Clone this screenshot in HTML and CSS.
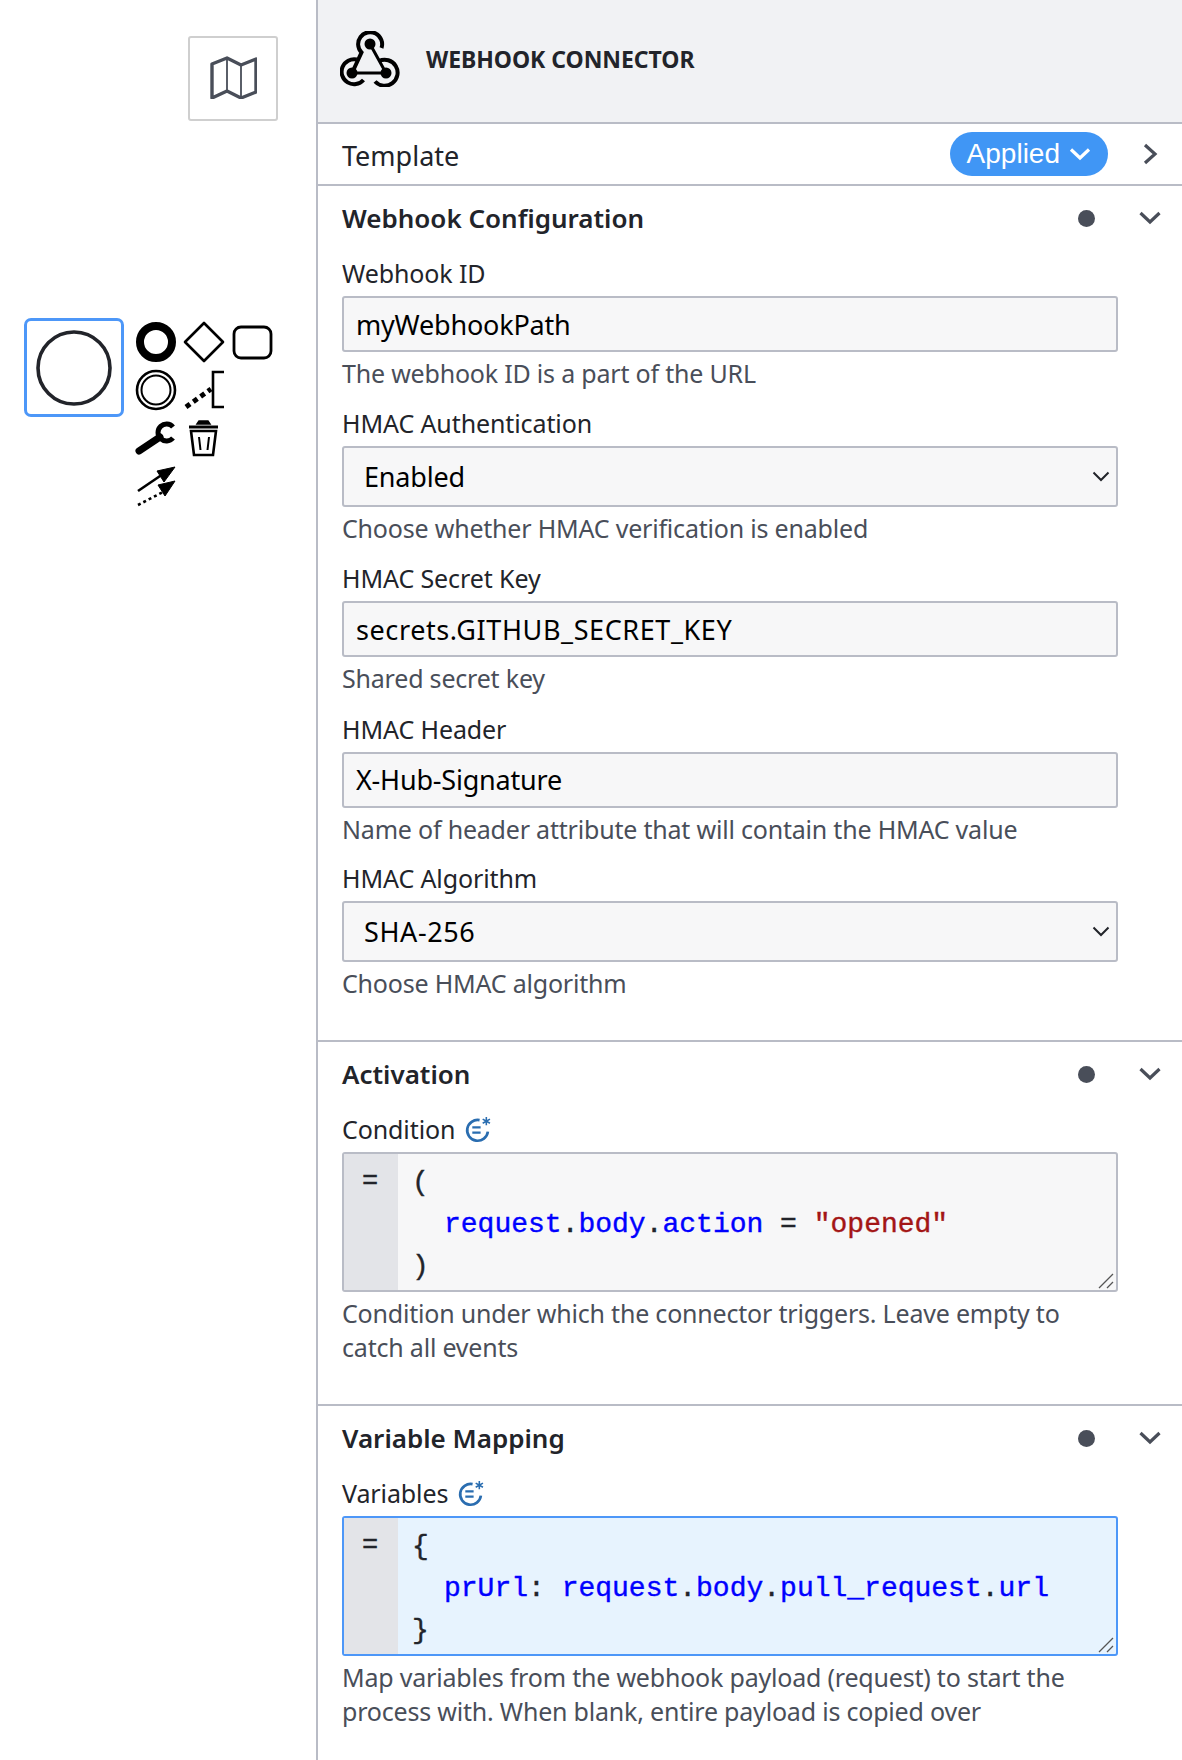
FILE: index.html
```html
<!DOCTYPE html>
<html lang="en">
<head>
    <meta charset="UTF-8">
    <meta name="viewport" content="width=device-width, initial-scale=1.0">
    <title>Webhook Connector</title>
    <link rel="stylesheet" href="styles.css">
</head>
<body>
    <div class="canvas">
        <button class="map-btn" type="button">
            <svg width="48" height="44" viewBox="0 0 48 44" fill="none" stroke="#494e59">
                <path d="M3 9 L18 3 L32 10 L47 4 V37 L32 43 L18 36 L3 43 Z" stroke-width="3.4" stroke-linejoin="round"/>
                <path d="M18 3 V36 M32 10 V43" stroke-width="1.8"/>
            </svg>
        </button>

        <div class="start-event">
            <svg width="78" height="78" viewBox="0 0 78 78"><circle cx="39" cy="39" r="36" fill="none" stroke="#22242a" stroke-width="3.6"/></svg>
        </div>

        <svg class="context-pad" width="150" height="190" viewBox="130 318 150 190" fill="none" stroke="#000">
            <circle cx="156" cy="342" r="16" stroke-width="8"/>
            <path d="M204 323 L223 342 L204 361 L185 342 Z" stroke-width="2.6" stroke-linejoin="round"/>
            <rect x="234" y="327" width="37" height="31" rx="7" stroke-width="2.8"/>
            <circle cx="156" cy="390" r="19" stroke-width="2.6"/>
            <circle cx="156" cy="390" r="14.5" stroke-width="2"/>
            <path d="M186 407 L211 389" stroke-width="5" stroke-dasharray="5 4"/>
            <path d="M224 372 H213 V407 H224" stroke-width="2.6"/>
            <path d="M139 451 L160 437" stroke-width="7" stroke-linecap="round"/>
            <path d="M173 427 A8.500 8.500 0 1 0 173 438" stroke-width="5"/>
            <path d="M189 427 H218" stroke-width="3"/>
            <path d="M197 424 L199 421 H208 L210 424 Z" fill="#000" stroke-width="1.5"/>
            <path d="M191 431 H216 L213 455 H194 Z" stroke-width="2.6"/>
            <path d="M199 437 L200.5 450 M209 437 L207.5 450" stroke-width="2"/>
            <path d="M138 491 L163 474" stroke-width="2.6"/>
            <path d="M175 467 L157 471 L164 482 Z" fill="#000" stroke-width="1"/>
            <path d="M138 505 L163 492" stroke-width="2.6" stroke-dasharray="3 3"/>
            <path d="M175 481 L158 485 L165 496 Z" fill="#000" stroke-width="1"/>
        </svg>
    </div>

    <div class="panel">
        <div class="panel-header">
            <svg class="webhook-icon" width="60" height="56" viewBox="0 0 60 56" fill="none" stroke="#000">
                <circle cx="30" cy="13" r="5.5" fill="#000" stroke="none"/>
                <circle cx="12" cy="42" r="5.5" fill="#000" stroke="none"/>
                <circle cx="46" cy="42" r="5.5" fill="#000" stroke="none"/>
                <path d="M30 13 L46 42 M12 42 H46" stroke-width="3"/>
                <path d="M12 42 L21.5 21.5 A12 12 0 1 1 41.5 17" stroke-width="4"/>
                <path d="M16.7 28.5 A12.5 12.5 0 1 0 23.5 49" stroke-width="4"/>
                <path d="M39 30 A13 13 0 1 1 35 50.5" stroke-width="4"/>
            </svg>
            <span class="panel-title">WEBHOOK CONNECTOR</span>
        </div>

        <div class="template-row">
            <span class="template-label">Template</span>
            <span class="pill">Applied
                <svg width="22" height="14" viewBox="0 0 22 14" fill="none" stroke="#fff" stroke-width="3.2"><path d="M2 2.5 L11 11 L20 2.5"/></svg>
            </span>
            <svg class="arrow-right" width="16" height="22" viewBox="0 0 16 22" fill="none" stroke="#494e59" stroke-width="3.2"><path d="M3 2 L13 11 L3 20"/></svg>
        </div>

        <div class="section section-first">
            <div class="section-head">
                <span class="section-title">Webhook Configuration</span>
                <span class="dot"></span>
                <svg class="arrow-down" width="22" height="14" viewBox="0 0 22 14" fill="none" stroke="#494e59" stroke-width="3.2"><path d="M1.500 2 L11 11 L20.500 2"/></svg>
            </div>

            <div class="entry">
                <label for="webhookId">Webhook ID</label>
                <input type="text" id="webhookId" value="myWebhookPath">
                <div class="desc">The webhook ID is a part of the URL</div>
            </div>

            <div class="entry entry-select">
                <label for="hmacAuth">HMAC Authentication</label>
                <div class="select-wrap">
                    <select id="hmacAuth"><option>Enabled</option><option>Disabled</option></select>
                    <svg class="select-arrow" width="18" height="11" viewBox="0 0 18 11" fill="none" stroke="#22242a" stroke-width="2"><path d="M1.500 1.500 L9 9 L16.500 1.500"/></svg>
                </div>
                <div class="desc">Choose whether HMAC verification is enabled</div>
            </div>

            <div class="entry entry-key">
                <label for="hmacKey">HMAC Secret Key</label>
                <input class="wide" type="text" id="hmacKey" value="secrets.GITHUB_SECRET_KEY">
                <div class="desc">Shared secret key</div>
            </div>

            <div class="entry">
                <label for="hmacHeader">HMAC Header</label>
                <input type="text" id="hmacHeader" value="X-Hub-Signature">
                <div class="desc">Name of header attribute that will contain the HMAC value</div>
            </div>

            <div class="entry entry-select">
                <label for="hmacAlgo">HMAC Algorithm</label>
                <div class="select-wrap">
                    <select class="wide" id="hmacAlgo"><option>SHA-256</option><option>SHA-1</option></select>
                    <svg class="select-arrow" width="18" height="11" viewBox="0 0 18 11" fill="none" stroke="#22242a" stroke-width="2"><path d="M1.500 1.500 L9 9 L16.500 1.500"/></svg>
                </div>
                <div class="desc">Choose HMAC algorithm</div>
            </div>
        </div>

        <div class="section section-activation">
            <div class="section-head">
                <span class="section-title">Activation</span>
                <span class="dot"></span>
                <svg class="arrow-down" width="22" height="14" viewBox="0 0 22 14" fill="none" stroke="#494e59" stroke-width="3.2"><path d="M1.500 2 L11 11 L20.500 2"/></svg>
            </div>

            <div class="entry">
                <div class="feel-label">Condition
                    <svg class="feel-icon" width="27" height="27" viewBox="0 0 26 26" fill="none" stroke="#2a6db0" stroke-width="2.6"><path d="M15 4 A10 10 0 1 0 23 15"/><path d="M8 11 H16 M8 16 H16" stroke-width="2.2"/><path d="M21.500 1 V9 M18 3 L25 7 M25 3 L18 7" stroke-width="1.500"/></svg>
                </div>
                <div class="editor">
                    <div class="gutter">=</div>
                    <div class="code">
                        <div class="code-line">(</div>
                        <div class="code-line indent"><span class="kw">request</span>.<span class="kw">body</span>.<span class="kw">action</span> = <span class="str">"opened"</span></div>
                        <div class="code-line">)</div>
                    </div>
                    <svg class="resize" width="16" height="16" viewBox="0 0 16 16" fill="none" stroke="#555" stroke-width="1.300"><path d="M1 15 L15 1 M9 15 L15 9"/></svg>
                </div>
                <div class="desc">Condition under which the connector triggers. Leave empty to catch all events</div>
            </div>
        </div>

        <div class="section section-mapping">
            <div class="section-head">
                <span class="section-title">Variable Mapping</span>
                <span class="dot"></span>
                <svg class="arrow-down" width="22" height="14" viewBox="0 0 22 14" fill="none" stroke="#494e59" stroke-width="3.2"><path d="M1.500 2 L11 11 L20.500 2"/></svg>
            </div>

            <div class="entry">
                <div class="feel-label">Variables
                    <svg class="feel-icon" width="27" height="27" viewBox="0 0 26 26" fill="none" stroke="#2a6db0" stroke-width="2.6"><path d="M15 4 A10 10 0 1 0 23 15"/><path d="M8 11 H16 M8 16 H16" stroke-width="2.2"/><path d="M21.500 1 V9 M18 3 L25 7 M25 3 L18 7" stroke-width="1.500"/></svg>
                </div>
                <div class="editor editor-focus">
                    <div class="gutter">=</div>
                    <div class="code">
                        <div class="code-line">{</div>
                        <div class="code-line indent"><span class="kw">prUrl</span>: <span class="kw">request</span>.<span class="kw">body</span>.<span class="kw">pull_request</span>.<span class="kw">url</span></div>
                        <div class="code-line">}</div>
                    </div>
                    <svg class="resize" width="16" height="16" viewBox="0 0 16 16" fill="none" stroke="#555" stroke-width="1.300"><path d="M1 15 L15 1 M9 15 L15 9"/></svg>
                </div>
                <div class="desc">Map variables from the webhook payload (request) to start the process with. When blank, entire payload is copied over</div>
            </div>
        </div>
    </div>
</body>
</html>
```

FILE: styles.css
```css
html, body {
    height: 100%;
}
body {
    margin: 0;
    display: flex;
    font-family: "Noto Sans", Arial, sans-serif;
    color: #22242a;
    background: #fff;
    overflow: hidden;
}
* {
    box-sizing: border-box;
}

/* diagram canvas */
.canvas {
    position: relative;
    width: 316px;
    flex: none;
}
.map-btn {
    position: absolute;
    left: 188px;
    top: 36px;
    width: 90px;
    height: 85px;
    padding: 0 0 4px;
    background: #fff;
    border: 2px solid #cfcfcf;
    border-radius: 3px;
    display: flex;
    align-items: center;
    justify-content: center;
}
.start-event {
    position: absolute;
    left: 24px;
    top: 318px;
    width: 100px;
    height: 99px;
    border: 3.5px solid #4d97f8;
    border-radius: 7px;
    display: flex;
    align-items: center;
    justify-content: center;
}
.context-pad {
    position: absolute;
    left: 130px;
    top: 318px;
}

/* properties panel */
.panel {
    flex: 1;
    border-left: 2px solid #b9bcc6;
}
.panel-header {
    height: 124px;
    background: #f1f2f4;
    border-bottom: 2px solid #b9bcc6;
    display: flex;
    align-items: center;
    padding: 0 0 4px 22px;
}
.webhook-icon {
    flex: none;
}
.panel-title {
    margin-left: 26px;
    font-size: 23px;
    font-weight: 700;
    letter-spacing: -0.05px;
}
.template-row {
    height: 62px;
    border-bottom: 2px solid #b9bcc6;
    display: flex;
    align-items: center;
    padding: 0 24px;
}
.template-label {
    font-size: 27px;
    flex: 1;
    padding-top: 2px;
}
.pill {
    display: flex;
    align-items: center;
    gap: 9px;
    height: 44px;
    padding: 0 17px;
    border-radius: 22px;
    background: #4096f5;
    color: #fff;
    font-family: "Liberation Sans", Arial, sans-serif;
    font-size: 28px;
}
.arrow-right {
    margin-left: 34px;
}

.section {
    border-bottom: 2px solid #b9bcc6;
    padding: 0 0 0 24px;
}
.section-first {
    height: 856px;
}
.section-activation {
    height: 364px;
}
.section-mapping {
    border-bottom: none;
}
.section-head {
    display: flex;
    align-items: center;
    height: 64px;
    margin-bottom: 8px;
    padding-right: 21px;
}
.section-title {
    flex: 1;
    font-size: 26px;
    font-weight: 600;
}
.dot {
    width: 17px;
    height: 17px;
    border-radius: 50%;
    background: #494e59;
    margin-right: 44px;
}

.entry {
    width: 776px;
    margin-bottom: 17px;
}
.entry-select {
    margin-bottom: 18px;
}
.entry-key {
    margin-bottom: 18px;
}
.entry label, .feel-label {
    display: block;
    font-size: 25px;
    line-height: 30px;
    letter-spacing: -0.1px;
    margin-bottom: 8px;
}
.feel-label {
    display: flex;
    align-items: center;
    gap: 9px;
}
.entry input, .entry select {
    display: block;
    width: 100%;
    font-family: inherit;
    font-size: 27px;
    letter-spacing: -0.2px;
    color: #000;
    background: #f7f7f8;
    border: 2px solid #b9bcc6;
    border-radius: 3px;
    padding: 0 12px;
    outline: none;
}
.entry input {
    height: 56px;
}
.select-wrap {
    position: relative;
    margin-top: 3px;
}
.entry select {
    height: 61px;
    padding: 0 20px;
    appearance: none;
}
.entry .wide {
    letter-spacing: 0.6px;
}
.select-arrow {
    position: absolute;
    right: 8px;
    top: 25px;
}
.desc {
    font-size: 25px;
    line-height: 33.5px;
    letter-spacing: -0.2px;
    color: #494e59;
    margin-top: 5px;
}

.editor {
    position: relative;
    display: flex;
    height: 140px;
    background: #f7f7f8;
    border: 2px solid #b9bcc6;
    border-radius: 3px;
}
.editor-focus {
    background: #e7f3fe;
    border-color: #4d97f8;
}
.gutter {
    width: 54px;
    flex: none;
    background: #e3e4e8;
    font-family: "Liberation Mono", monospace;
    font-size: 27px;
    line-height: 57px;
    text-align: center;
    padding-right: 2px;
    -webkit-text-stroke: 0.4px;
}
.code {
    padding: 8px 0 0 14px;
    font-family: "Liberation Mono", monospace;
    font-size: 28px;
    -webkit-text-stroke: 0.4px;
}
.code-line {
    line-height: 42px;
    white-space: pre;
}
.indent {
    padding-left: 32px;
}
.kw {
    color: #0000ff;
}
.str {
    color: #a31515;
}
.resize {
    position: absolute;
    right: 2px;
    bottom: 1px;
}
```
